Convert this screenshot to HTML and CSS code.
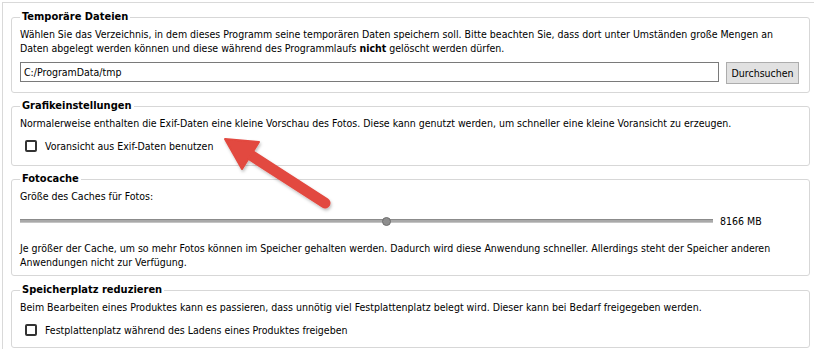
FILE: index.html
```html
<!DOCTYPE html>
<html lang="de">
<head>
<meta charset="utf-8">
<title>Einstellungen</title>
<link rel="stylesheet" href="styles.css">
</head>
<body>
<div class="panel">
  <fieldset class="group g1">
    <legend>Temporäre Dateien</legend>
    <p class="txt">Wählen Sie das Verzeichnis, in dem dieses Programm seine temporären Daten speichern soll. Bitte beachten Sie, dass dort unter Umständen große Mengen an<br>Daten abgelegt werden können und diese während des Programmlaufs <b>nicht</b> gelöscht werden dürfen.</p>
    <div class="pathrow">
      <div class="input">C:/ProgramData/tmp</div>
      <div class="button">Durchsuchen</div>
    </div>
  </fieldset>

  <fieldset class="group g2">
    <legend>Grafikeinstellungen</legend>
    <p class="txt">Normalerweise enthalten die Exif-Daten eine kleine Vorschau des Fotos. Diese kann genutzt werden, um schneller eine kleine Voransicht zu erzeugen.</p>
    <label class="check"><span class="box"></span><span>Voransicht aus Exif-Daten benutzen</span></label>
  </fieldset>

  <fieldset class="group g3">
    <legend>Fotocache</legend>
    <p class="txt">Größe des Caches für Fotos:</p>
    <div class="sliderrow">
      <div class="slider"><div class="track"></div><div class="thumb"></div></div>
      <span class="value">8166 MB</span>
    </div>
    <p class="txt info">Je größer der Cache, um so mehr Fotos können im Speicher gehalten werden. Dadurch wird diese Anwendung schneller. Allerdings steht der Speicher anderen<br>Anwendungen nicht zur Verfügung.</p>
  </fieldset>

  <fieldset class="group g4">
    <legend>Speicherplatz reduzieren</legend>
    <p class="txt">Beim Bearbeiten eines Produktes kann es passieren, dass unnötig viel Festplattenplatz belegt wird. Dieser kann bei Bedarf freigegeben werden.</p>
    <label class="check"><span class="box"></span><span>Festplattenplatz während des Ladens eines Produktes freigeben</span></label>
  </fieldset>
</div>

<svg class="arrow" width="814" height="349" viewBox="0 0 814 349" aria-hidden="true">
  <defs>
    <filter id="sh" x="-20%" y="-20%" width="140%" height="140%">
      <feDropShadow dx="1" dy="2" stdDeviation="1.5" flood-color="#000" flood-opacity="0.25"/>
    </filter>
  </defs>
  <g filter="url(#sh)" fill="#e2483f" stroke="#e2483f">
    <line x1="325" y1="203" x2="249" y2="154" stroke-width="11" stroke-linecap="round"/>
    <polygon points="225,139 259,142 242,169" stroke-width="2" stroke-linejoin="round"/>
  </g>
</svg>
</body>
</html>
```

FILE: styles.css
```css
html, body {
  margin: 0;
  padding: 0;
  background: #ffffff;
}

body {
  width: 814px;
  height: 349px;
  overflow: hidden;
  position: relative;
  font-family: "DejaVu Sans Condensed", "DejaVu Sans", sans-serif;
  font-size: 10.5px;
  line-height: 14px;
  color: #000;
}

.panel {
  margin: 2px 0 0 2px;
  width: 840px;
  border-top: 1px solid #d9d9d9;
  border-left: 1px solid #d9d9d9;
  padding: 7px 0 20px 8px;
  box-sizing: border-box;
  height: 360px;
}

.group {
  width: 799px;
  box-sizing: border-box;
  margin: 0;
  border: 1px solid #d7d7d7;
  border-radius: 3px;
  padding: 3px 10px 8px 8px;
  min-width: 0;
}

.group legend {
  padding: 0 2px;
  margin: 0;
  font-size: 11px;
  font-weight: bold;
  line-height: 14px;
}

.g2 { margin-top: 6px; padding-top: 3px; padding-bottom: 12px; }
.g3 { margin-top: 6px; padding-top: 3px; padding-bottom: 6px; }
.g4 { margin-top: 7px; padding-top: 3px; padding-bottom: 10px; }

.txt {
  margin: 0;
  white-space: nowrap;
}

.txt b { font-weight: bold; }

.pathrow {
  display: flex;
  gap: 7px;
  margin-top: 7px;
  align-items: flex-start;
}

.input {
  width: 700px;
  height: 20px;
  box-sizing: border-box;
  border: 1px solid #7a7a7a;
  padding: 2px 0 0 3px;
  line-height: 14px;
}

.button {
  width: 73px;
  height: 22px;
  box-sizing: border-box;
  border: 1px solid #adadad;
  background: #e1e1e1;
  text-align: center;
  line-height: 20px;
}

.check {
  display: flex;
  align-items: center;
  gap: 8px;
  margin-top: 9px;
  padding-left: 5px;
  height: 14px;
}

.box {
  width: 12px;
  height: 12px;
  box-sizing: border-box;
  border: 2px solid #333;
  border-radius: 2px;
  background: #fff;
  flex: none;
}

.sliderrow {
  display: flex;
  align-items: center;
  gap: 7px;
  margin-top: 11px;
  height: 14px;
}

.slider {
  position: relative;
  width: 693px;
  height: 14px;
  display: flex;
  align-items: center;
}

.track {
  width: 100%;
  height: 4px;
  box-sizing: border-box;
  background: #a9a9a9;
  border-top: 1px solid #8b8b8b;
  border-bottom: 1px solid #c4c4c4;
}

.thumb {
  position: absolute;
  left: 362px;
  top: 3px;
  width: 9px;
  height: 9px;
  box-sizing: border-box;
  border-radius: 50%;
  background: #8e8e8e;
  border: 1px solid #6f6f6f;
}

.value {
  white-space: nowrap;
}

.info {
  margin-top: 13px;
}

.arrow {
  position: absolute;
  left: 0;
  top: 0;
  pointer-events: none;
}
```
